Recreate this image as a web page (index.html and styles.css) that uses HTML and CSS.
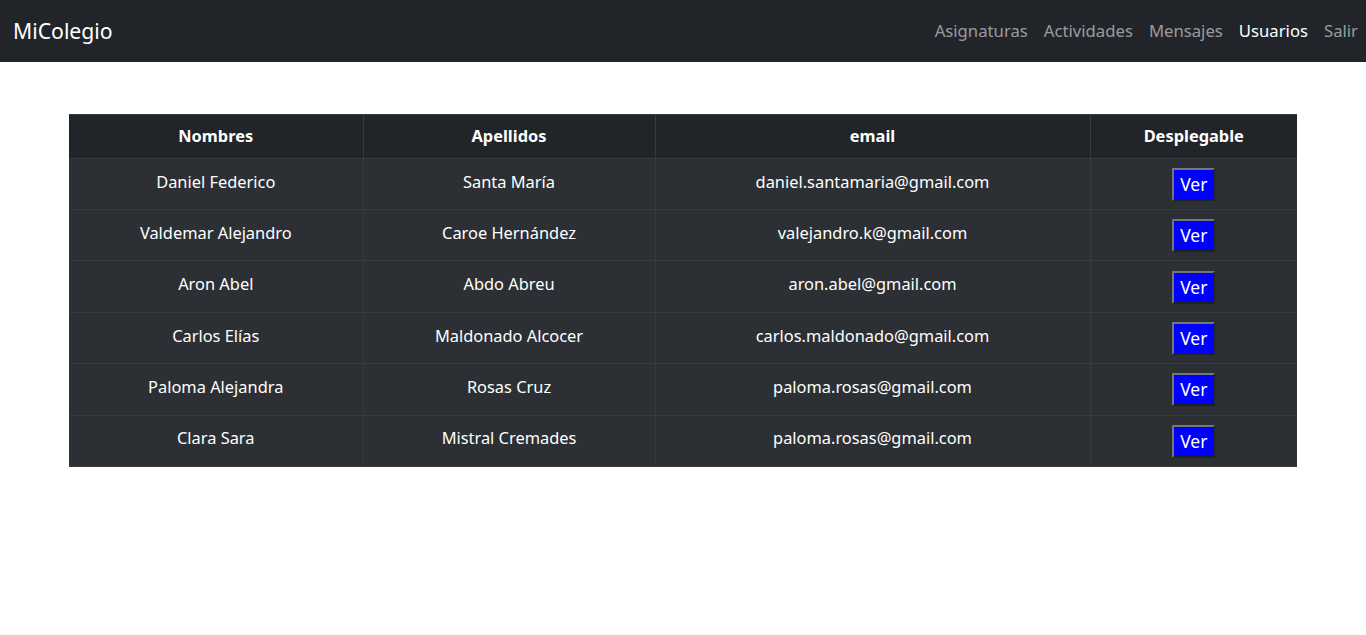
FILE: index.html
```html
<!DOCTYPE html>
<html lang="es">
<head>
<meta charset="utf-8">
<title>MiColegio</title>
<link rel="stylesheet" href="styles.css">
</head>
<body>
<nav class="navbar">
  <a class="brand" href="#">MiColegio</a>
  <ul class="nav">
    <li><a href="#">Asignaturas</a></li>
    <li><a href="#">Actividades</a></li>
    <li><a href="#">Mensajes</a></li>
    <li><a class="active" href="#">Usuarios</a></li>
    <li><a href="#">Salir</a></li>
  </ul>
</nav>
<main class="main">
  <table class="users">
    <thead>
      <tr>
        <th class="c1">Nombres</th>
        <th class="c2">Apellidos</th>
        <th class="c3">email</th>
        <th class="c4">Desplegable</th>
      </tr>
    </thead>
    <tbody>
      <tr><td>Daniel Federico</td><td>Santa María</td><td>daniel.santamaria@gmail.com</td><td><button class="ver">Ver</button></td></tr>
      <tr><td>Valdemar Alejandro</td><td>Caroe Hernández</td><td>valejandro.k@gmail.com</td><td><button class="ver">Ver</button></td></tr>
      <tr><td>Aron Abel</td><td>Abdo Abreu</td><td>aron.abel@gmail.com</td><td><button class="ver">Ver</button></td></tr>
      <tr><td>Carlos Elías</td><td>Maldonado Alcocer</td><td>carlos.maldonado@gmail.com</td><td><button class="ver">Ver</button></td></tr>
      <tr><td>Paloma Alejandra</td><td>Rosas Cruz</td><td>paloma.rosas@gmail.com</td><td><button class="ver">Ver</button></td></tr>
      <tr><td>Clara Sara</td><td>Mistral Cremades</td><td>paloma.rosas@gmail.com</td><td><button class="ver">Ver</button></td></tr>
    </tbody>
  </table>
</main>
</body>
</html>
```
FILE: styles.css
```css
* { box-sizing: border-box; }
html, body { margin: 0; padding: 0; }
body {
  font-family: "Noto Sans", "Open Sans", "DejaVu Sans", sans-serif;
  font-size: 16.4px;
  line-height: 1.5;
  color: #212529;
  background: #fff;
}
.navbar {
  height: 62px;
  background: #212529;
  display: flex;
  align-items: center;
  justify-content: space-between;
  padding: 0 0 0 13px;
}
.brand {
  color: #fff;
  font-size: 21.2px;
  text-decoration: none;
  line-height: 30px;
}
.nav {
  list-style: none;
  margin: 0;
  padding: 0;
  display: flex;
}
.nav a {
  display: block;
  padding: 8px 8px;
  color: rgba(255,255,255,.55);
  text-decoration: none;
  font-size: 16.7px;
}
.nav a.active { color: #fff; }
.main {
  margin: 52px 69px 0;
}
.users {
  width: 100%;
  border-collapse: collapse;
  background: #2c3034;
  color: #fff;
  text-align: center;
}
.users th, .users td {
  border: 1px solid #373b3e;
  padding: 8px;
}
.users tr > :first-child { border-left: none; }
.users tr > :last-child { border-right: none; }
.users thead tr { border-top: none; }
.users th {
  background: #212529;
  font-weight: 700;
  padding: 9px 8px 9px;
}
.users td {
  height: 51.4px;
  padding: 0 8px 4px;
  vertical-align: middle;
}
.c1 { width: 294px; }
.c2 { width: 292px; }
.c3 { width: 435px; }
.c4 { width: 207px; }
.ver {
  background: #0000ff;
  color: #fff;
  font-family: inherit;
  font-size: 17.5px;
  line-height: 25px;
  padding: 2px 6px;
  border: 2px outset #767676;
  vertical-align: middle;
  margin: 5px 0 0;
  cursor: pointer;
}
```
